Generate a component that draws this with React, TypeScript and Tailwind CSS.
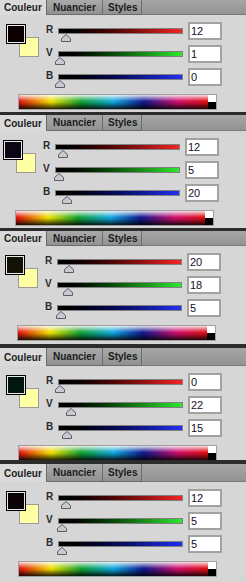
import React from 'react';

type Panel = {
  fg: string;
  r: number;
  v: number;
  b: number;
  sep: string;
  tab: string;
  body: string;
  pad: string;
};

const panels: Panel[] = [
  { fg: '#0c0100', r: 12, v: 1, b: 0, sep: 'h-0', tab: 'h-[15px]', body: 'h-[97px]', pad: 'pl-[6px]' },
  { fg: '#0c0514', r: 12, v: 5, b: 20, sep: 'h-[3px]', tab: 'h-[16px]', body: 'h-[97px]', pad: 'pl-[3px]' },
  { fg: '#141205', r: 20, v: 18, b: 5, sep: 'h-[3px]', tab: 'h-[15px]', body: 'h-[98px]', pad: 'pl-[5px]' },
  { fg: '#00160f', r: 0, v: 22, b: 15, sep: 'h-[4px]', tab: 'h-[18px]', body: 'h-[94px]', pad: 'pl-[6px]' },
  { fg: '#0c0505', r: 12, v: 5, b: 5, sep: 'h-[4px]', tab: 'h-[18px]', body: 'h-[100px]', pad: 'pl-[6px]' },
];

function Thumb({ value }: { value: number }) {
  // thumb centre sits on value/255 of the track
  const left = (value / 255) * 123 - 4;
  return (
    <svg className="absolute top-[5px]" style={{ left }} width="10" height="8" viewBox="0 0 10 8">
      <path d="M5 0.5 L9.5 4.5 V7.5 H0.5 V4.5 Z" fill="#c6cad2" stroke="#5e5e5e" strokeWidth="1" />
    </svg>
  );
}

function SliderRow({ label, value, track }: { label: string; value: number; track: string }) {
  return (
    <div className="flex items-center h-[18px]">
      <span className="w-[14px] pl-[2px] -mt-[3px] text-[10px] font-bold text-[#2a2a2a]">{label}</span>
      <div className={`relative w-[125px] h-[6px] border border-[#808080] ${track}`}>
        <Thumb value={value} />
      </div>
      <div className="ml-[5px] w-[34px] h-[18px] border-2 border-[#a2a2a2] bg-white pl-[1px] flex items-center text-[11px] text-[#10102a] leading-none">
        {value}
      </div>
    </div>
  );
}

function ColorPanel({ p }: { p: Panel }) {
  return (
    <div>
      <div className={`${p.sep} bg-[#2c2c2c]`} />
      {/* tabs */}
      <div className={`flex ${p.tab} text-[10px] font-bold text-[#1c1c1c]`}>
        <div className="w-[47px] bg-[#dadada] border-r border-[#6a6a6a] flex items-center pl-[4px]">Couleur</div>
        <div className="w-[56px] bg-linear-to-b from-[#aaaaaa] to-[#919191] border-r border-b border-[#6c6c6c] flex items-center pl-[6px]">
          Nuancier
        </div>
        <div className="w-[39px] bg-linear-to-b from-[#aaaaaa] to-[#919191] border-r border-b border-[#6c6c6c] flex items-center pl-[5px]">
          Styles
        </div>
        <div className="flex-1 bg-linear-to-b from-[#a6a6a6] to-[#939393] border-b border-[#7a7a7a]" />
      </div>
      {/* body */}
      <div className={`bg-[#d6d6d6] ${p.body} ${p.pad} pt-[7px]`}>
        <div className="flex">
          <div className="relative w-[38px] h-[34px] mt-[2px]">
            <div className="absolute left-[13px] top-[13px] w-[20px] h-[20px] border border-[#9a9a9a] bg-[#ffffa4]" />
            <div className="absolute left-0 top-0 w-[20px] h-[20px] border border-black">
              <div className="w-full h-full border border-[#e8e8e8]" style={{ backgroundColor: p.fg }} />
            </div>
          </div>
          <div className="flex flex-col gap-[5px]">
            <SliderRow label="R" value={p.r} track="bg-linear-to-r from-black to-[#f42424]" />
            <SliderRow label="V" value={p.v} track="bg-linear-to-r from-black to-[#2ee82e]" />
            <SliderRow label="B" value={p.b} track="bg-linear-to-r from-black to-[#2030f2]" />
          </div>
        </div>
        {/* spectrum */}
        <div className="mt-[8px] ml-[12px] w-[199px] h-[16px] border border-[#a0a0a0] flex">
          <div className="flex-1 bg-[linear-gradient(to_right,#e01010,#f0e000_17%,#10a030_33%,#10a8e0_50%,#101890_66%,#d0106c_84%,#e01010)]">
            <div className="w-full h-full bg-[linear-gradient(to_bottom,rgba(255,255,255,0.85),rgba(255,255,255,0)_45%,rgba(0,0,0,0)_50%,rgba(0,0,0,0.85))]" />
          </div>
          <div className="w-[8px] flex flex-col">
            <div className="flex-1 bg-white" />
            <div className="flex-1 bg-black" />
          </div>
        </div>
      </div>
    </div>
  );
}

export default function App() {
  return (
    <div className="w-[246px] h-[582px] overflow-hidden bg-[#d6d6d6] font-['Liberation_Sans',Arial,sans-serif]">
      {panels.map((p, i) => (
        <ColorPanel key={i} p={p} />
      ))}
    </div>
  );
}
